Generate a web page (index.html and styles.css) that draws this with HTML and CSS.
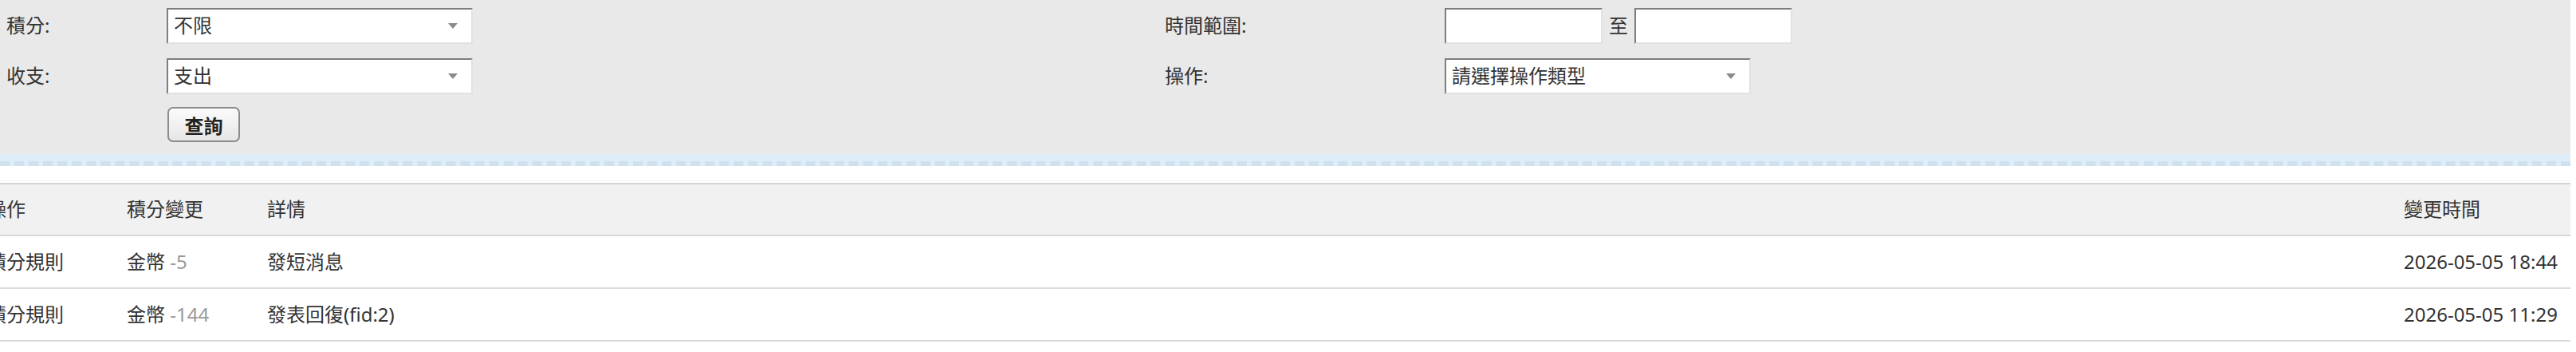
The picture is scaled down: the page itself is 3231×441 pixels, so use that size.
FILE: index.html
```html
<!DOCTYPE html>
<html lang="zh-Hant">
<head>
<meta charset="utf-8">
<title>積分記錄</title>
<link rel="stylesheet" href="styles.css">
</head>
<body>
<div class="page">
  <form class="filter">
    <div class="row">
      <div class="lbl">積分:</div>
      <div class="fld"><div class="sel"><span>不限</span><i class="arrow"></i></div></div>
      <div class="lbl">時間範圍:</div>
      <div class="fld range"><div class="inp"></div><span class="to">至</span><div class="inp"></div></div>
    </div>
    <div class="row">
      <div class="lbl">收支:</div>
      <div class="fld"><div class="sel"><span>支出</span><i class="arrow"></i></div></div>
      <div class="lbl">操作:</div>
      <div class="fld"><div class="sel"><span>請選擇操作類型</span><i class="arrow"></i></div></div>
    </div>
    <div class="row btnrow">
      <div class="lbl"></div>
      <div class="fld"><button type="button" class="btn">查詢</button></div>
    </div>
  </form>
  <div class="band"></div>
  <div class="list">
    <table class="log">
      <colgroup>
        <col class="c1"><col class="c2"><col class="c3"><col class="c4">
      </colgroup>
      <thead>
        <tr><th>操作</th><th>積分變更</th><th>詳情</th><th>變更時間</th></tr>
      </thead>
      <tbody>
        <tr><td>積分規則</td><td>金幣 <span class="num">-5</span></td><td>發短消息</td><td>2026-05-05 18:44</td></tr>
        <tr><td>積分規則</td><td>金幣 <span class="num">-144</span></td><td>發表回復(fid:2)</td><td>2026-05-05 11:29</td></tr>
      </tbody>
    </table>
  </div>
</div>
</body>
</html>
```
FILE: styles.css
```css
html, body {
  margin: 0;
  padding: 0;
  background: #ffffff;
}
body {
  font-family: "Noto Sans", "Noto Sans CJK TC", sans-serif;
  font-size: 24px;
  line-height: 1.2;
  color: #333333;
  overflow: hidden;
}
.page {
  width: 3224px;
}
.filter {
  background: #e9e9e9;
  display: flex;
  flex-direction: column;
  gap: 18px;
  padding: 10px 0 15px 8px;
  margin: 0;
}
.row {
  display: grid;
  grid-template-columns: 201px 1252px 351px 1fr;
  height: 45px;
  align-items: center;
}
.row.btnrow {
  height: 44px;
  margin-top: -2px;
}
.filter .lbl {
  color: #333;
}
.fld {
  display: flex;
  align-items: center;
  height: 100%;
}
.sel, .inp {
  box-sizing: border-box;
  height: 45px;
  background: #ffffff;
  border-top: 2px solid #7e7e7e;
  border-left: 2px solid #7e7e7e;
  border-right: 2px solid #e2e2e2;
  border-bottom: 2px solid #e2e2e2;
}
.sel {
  width: 384px;
  display: flex;
  align-items: center;
  justify-content: space-between;
  padding: 0 17px 0 7px;
}
.arrow {
  width: 0;
  height: 0;
  border-left: 6px solid transparent;
  border-right: 6px solid transparent;
  border-top: 7px solid #8a8a8a;
}
.inp {
  width: 198px;
}
.to {
  width: 40px;
  text-align: center;
}
.btn {
  box-sizing: border-box;
  width: 91px;
  height: 44px;
  margin-left: 1px;
  border: 2px solid #8c8c8c;
  border-radius: 7px;
  background: linear-gradient(#fbfbfb, #e6e6e6);
  font-family: "Noto Sans", "Noto Sans CJK TC", sans-serif;
  font-size: 24px;
  font-weight: bold;
  color: #222;
  padding: 0;
}
.band {
  height: 9px;
  background: #deedf8;
  border-bottom: 6px dashed #cfe0ee;
}
.list {
  margin-top: 18px;
  border-top: 1px solid #f1f1f1;
  padding-top: 2px;
  overflow: hidden;
}
.log {
  border-collapse: collapse;
  table-layout: fixed;
  width: calc(100% + 16px);
  margin-left: -16px;
}
.c1 { width: 175px; }
.c2 { width: 176px; }
.c4 { width: 209px; }
.log th, .log td {
  text-align: left;
  font-weight: normal;
  padding: 0;
  white-space: nowrap;
  vertical-align: middle;
}
.log thead tr {
  background: #f1f1f1;
  border-top: 2px solid #d3d3d3;
  border-bottom: 2px solid #d6d6d6;
}
.log th {
  height: 63px;
}
.log td {
  height: 64px;
  border-bottom: 2px solid #dadada;
}
.num {
  color: #999999;
}
```
